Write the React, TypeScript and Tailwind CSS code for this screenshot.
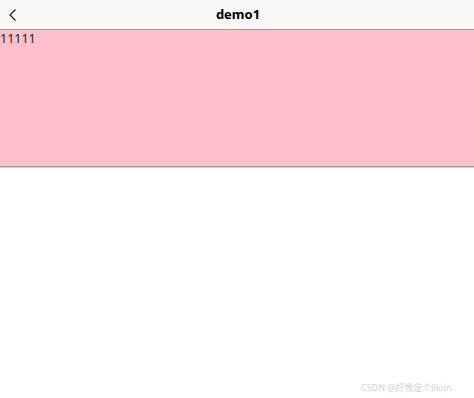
export default function App() {
  return (
    <div className="relative w-[474px] h-[398px] bg-white" style={{ fontFamily: '"Noto Sans", "Noto Sans CJK SC", sans-serif' }}>
      {/* nav bar */}
      <div className="relative flex items-center justify-center h-[30px] bg-[#f7f7f7] border-b border-[#9aa38a]">
        <svg className="absolute left-[7px] top-[8px]" width="12" height="14" viewBox="0 0 12 14" fill="none">
          <path d="M8.5 1.5 L3 7 L8.5 12.5" stroke="#222" strokeWidth="1.3" />
        </svg>
        <span className="text-[13px] font-bold text-black pl-[2px]">demo1</span>
      </div>
      {/* pink block */}
      <div className="h-[137px] bg-[#ffc0cb] border-b border-[#8fa48a] text-[12.5px] leading-[16px] text-[#222] pt-[1px]">
        11111
      </div>
      <div className="h-px bg-[#c8e0c0]" />
      <div className="absolute right-[22px] bottom-[4px] text-[9px] text-[#d4d4d4]">CSDN @好像是个likun</div>
    </div>
  )
}
